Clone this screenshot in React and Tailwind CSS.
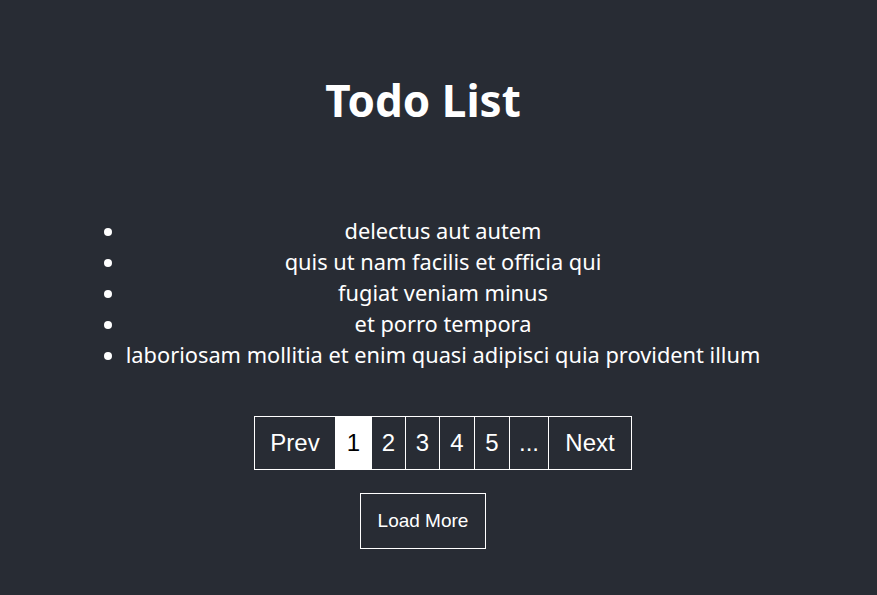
import React from 'react';

const todos = [
    'delectus aut autem',
    'quis ut nam facilis et officia qui',
    'fugiat veniam minus',
    'et porro tempora',
    'laboriosam mollitia et enim quasi adipisci quia provident illum',
];

const pages = [
    { label: 'Prev', w: 'w-[81px]' },
    { label: '1', w: 'w-[36px]', active: true },
    { label: '2', w: 'w-[34px]' },
    { label: '3', w: 'w-[34px]' },
    { label: '4', w: 'w-[35px]' },
    { label: '5', w: 'w-[35px]' },
    { label: '...', w: 'w-[39px]' },
    { label: 'Next', w: 'w-[82px]' },
];

const App = () => {
    return (
        <div className="min-h-screen bg-[#282c34] text-white">
            <div className="w-[846px] flex flex-col items-center font-['Noto_Sans',sans-serif]">
                {/* Title */}
                <h1 className="mt-[70px] text-[44px] font-bold leading-[60px]">Todo List</h1>

                {/* Todo items */}
                <ul className="mt-[85px] w-fit pl-10 list-disc text-center text-[21.8px] leading-[31px]">
                    {todos.map((t) => (
                        <li key={t}>{t}</li>
                    ))}
                </ul>

                {/* Pagination */}
                <ul className="mt-[46px] w-fit pl-10 flex font-['Liberation_Sans',Arial,sans-serif] text-[24px]">
                    <li className="flex border border-white divide-x divide-white">
                        {pages.map((p) => (
                            <span
                                key={p.label}
                                className={`${p.w} h-[52px] flex items-center justify-center ${p.active ? 'bg-white text-black' : ''}`}
                            >
                                {p.label}
                            </span>
                        ))}
                    </li>
                </ul>

                {/* Load more */}
                <button className="mt-[23px] w-[126px] h-[56px] border border-white font-['Liberation_Sans',Arial,sans-serif] text-[19px] text-white">
                    Load More
                </button>
            </div>
        </div>
    );
};

export default App;
